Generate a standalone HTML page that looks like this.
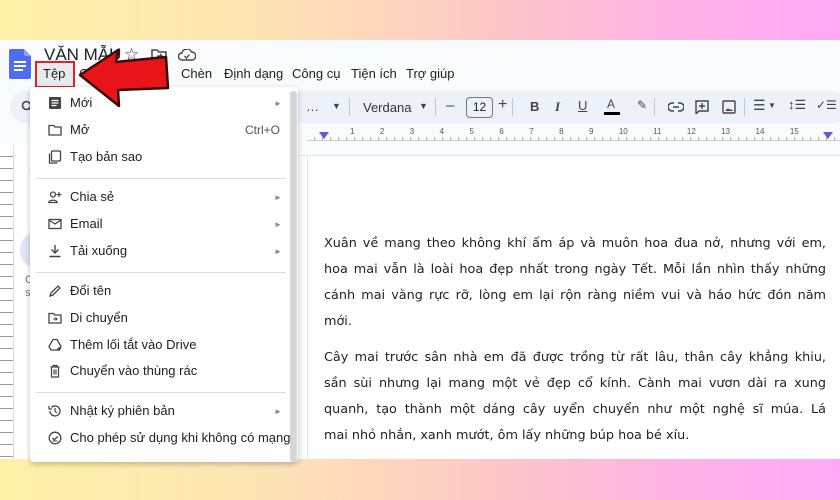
<!DOCTYPE html>
<html><head><meta charset="utf-8">
<style>
*{margin:0;padding:0;box-sizing:border-box}
body{width:840px;height:500px;overflow:hidden;position:relative;font-family:"Liberation Sans",Arial,sans-serif;color:#202124;background:#f9fbfd}
.band{position:absolute;left:0;width:840px;background:linear-gradient(90deg,#fdf1a8 0%,#fde6b4 30%,#fdc6c8 60%,#fdb3e6 80%,#ffa9f6 100%)}
.a{position:absolute;white-space:nowrap}
.menu{position:absolute;left:30px;top:87px;width:268px;height:375px;background:#fff;box-shadow:0 2px 6px rgba(0,0,0,.25);border-radius:4px}
.mi{position:absolute;left:40px;font-size:13px;color:#202124}
.ic{position:absolute;left:18px;width:14px;height:14px}
.ar{position:absolute;left:244px;font-size:8px;color:#888}
.sep{position:absolute;left:6px;right:12px;height:1px;background:#dadce0}
.doc{position:absolute;left:324px;width:502px;font-family:"DejaVu Sans",Verdana,sans-serif;font-size:12.8px;color:#222;line-height:26px}
.doc span{display:block;text-align:justify;text-align-last:justify;white-space:nowrap}
.doc span.l{text-align-last:left}
</style></head><body>
<div class="band" style="top:0;height:40px"></div>
<div class="band" style="top:459px;height:41px"></div>

<!-- header -->
<svg class="a" style="left:9px;top:49px" width="22" height="30" viewBox="0 0 22 30"><path d="M2 0h13l7 7v21a2 2 0 0 1-2 2H2a2 2 0 0 1-2-2V2a2 2 0 0 1 2-2z" fill="#4f6cf5"/><path d="M15 0l7 7h-5a2 2 0 0 1-2-2z" fill="#8fa3f8"/><rect x="5" y="12" width="12" height="2" fill="#fff"/><rect x="5" y="16" width="12" height="2" fill="#fff"/><rect x="5" y="20" width="9" height="2" fill="#fff"/></svg>
<div class="a" style="left:44px;top:45px;font-size:17px;color:#1f1f1f">VĂN MẪU</div>
<div class="a" style="left:124px;top:45px;font-size:17px;color:#444">☆</div>
<svg class="a" style="left:151px;top:48px" width="16" height="14" viewBox="0 0 16 14"><path d="M1 2h5l2 2h7v9H1z" fill="none" stroke="#444" stroke-width="1.5"/><path d="M6 8h5M9 6l2 2-2 2" stroke="#444" stroke-width="1.3" fill="none"/></svg>
<svg class="a" style="left:178px;top:49px" width="18" height="12" viewBox="0 0 18 12"><path d="M4 11a3.5 3.5 0 0 1 0-7 5 5 0 0 1 9.5-1A4 4 0 0 1 14 11z" fill="none" stroke="#444" stroke-width="1.4"/><path d="M6.5 7l2 2 3-3.5" fill="none" stroke="#444" stroke-width="1.3"/></svg>
<div class="a" style="left:35px;top:61px;width:40px;height:27px;border:2.5px solid #e52027;background:#e8eaed"></div>
<div class="a" style="left:43px;top:66px;font-size:13px">Tệp</div>
<div class="a" style="left:79px;top:66px;font-size:13px">Chỉnh sửa</div>
<div class="a" style="left:181px;top:66px;font-size:13px">Chèn</div>
<div class="a" style="left:224px;top:66px;font-size:13px">Định dạng</div>
<div class="a" style="left:292px;top:66px;font-size:13px">Công cụ</div>
<div class="a" style="left:351px;top:66px;font-size:13px">Tiện ích</div>
<div class="a" style="left:406px;top:66px;font-size:13px">Trợ giúp</div>

<!-- toolbar -->
<div class="a" style="left:10px;top:91px;width:840px;height:32px;border-radius:16px;background:#edf2fa"></div>
<svg class="a" style="left:21px;top:100px" width="14" height="14" viewBox="0 0 14 14"><circle cx="5.5" cy="5.5" r="4" fill="none" stroke="#444" stroke-width="1.6"/><path d="M8.5 8.5l4 4" stroke="#444" stroke-width="1.8"/></svg>
<div class="a" style="left:306px;top:99px;font-size:13px;color:#444">…</div>
<div class="a" style="left:332px;top:101px;font-size:9px;color:#444">▼</div>
<div class="a" style="left:349px;top:98px;width:1px;height:18px;background:#c7c7c7"></div>
<div class="a" style="left:363px;top:100px;font-size:13px;color:#333">Verdana</div>
<div class="a" style="left:419px;top:101px;font-size:9px;color:#444">▼</div>
<div class="a" style="left:435px;top:98px;width:1px;height:18px;background:#c7c7c7"></div>
<div class="a" style="left:446px;top:97px;font-size:15px;color:#444">–</div>
<div class="a" style="left:466px;top:97px;width:27px;height:21px;border:1px solid #747775;border-radius:4px;font-size:12px;text-align:center;line-height:19px">12</div>
<div class="a" style="left:498px;top:96px;font-size:16px;color:#444">+</div>
<div class="a" style="left:512px;top:98px;width:1px;height:18px;background:#c7c7c7"></div>
<div class="a" style="left:530px;top:99px;font-size:13px;font-weight:bold;color:#444">B</div>
<div class="a" style="left:555px;top:99px;font-size:13px;font-style:italic;font-family:'Liberation Serif',serif;font-weight:bold;color:#444">I</div>
<div class="a" style="left:578px;top:98px;font-size:13px;text-decoration:underline;color:#444">U</div>
<div class="a" style="left:607px;top:97px;font-size:12px;color:#444">A</div>
<div class="a" style="left:604px;top:112px;width:16px;height:3px;background:#000"></div>
<div class="a" style="left:637px;top:98px;font-size:12px;color:#444">✎</div>
<div class="a" style="left:654px;top:98px;width:1px;height:18px;background:#c7c7c7"></div>
<svg class="a" style="left:668px;top:102px" width="16" height="10" viewBox="0 0 16 10"><path d="M6 1H4a4 4 0 0 0 0 8h2M10 1h2a4 4 0 0 1 0 8h-2M5 5h6" fill="none" stroke="#444" stroke-width="1.5"/></svg>
<svg class="a" style="left:695px;top:100px" width="14" height="14" viewBox="0 0 14 14"><path d="M1 1h12v10H4l-3 3z" fill="none" stroke="#444" stroke-width="1.4"/><path d="M7 3v6M4 6h6" stroke="#444" stroke-width="1.4"/></svg>
<svg class="a" style="left:722px;top:100px" width="14" height="14" viewBox="0 0 14 14"><rect x="1" y="1" width="12" height="12" rx="1" fill="none" stroke="#444" stroke-width="1.4"/><path d="M3 11l3-3 2 2 1-1 2 2z" fill="#444"/></svg>
<div class="a" style="left:744px;top:98px;width:1px;height:18px;background:#c7c7c7"></div>
<div class="a" style="left:753px;top:97px;font-size:14px;color:#444">☰</div>
<div class="a" style="left:768px;top:101px;font-size:8px;color:#444">▼</div>
<div class="a" style="left:788px;top:97px;font-size:13px;color:#444">↕☰</div>
<div class="a" style="left:816px;top:98px;font-size:12px;color:#444">✓☰</div>

<!-- ruler -->
<div class="a" style="left:307px;top:128px;width:533px;height:13px;border-bottom:1px solid #c9ccd1;background:repeating-linear-gradient(90deg,transparent 0 7px,#aaa 7px 8px);background-size:8px 4px;background-repeat:repeat-x;background-position:0 9px"></div>
<div class="a" style="left:319px;top:132px;width:0;height:0;border-left:5px solid transparent;border-right:5px solid transparent;border-top:7px solid #6a5acd"></div>
<div class="a" style="left:823px;top:132px;width:0;height:0;border-left:5px solid transparent;border-right:5px solid transparent;border-top:7px solid #6a5acd"></div>
<div class="a" style="left:350px;top:127px;font-size:8px;color:#555;word-spacing:23.2px">1 2 3 4 5 6 7 8 9 10 11 12 13 14 15</div>
<div class="a" style="left:0;top:155px;width:840px;height:1px;background:#e3e5e8"></div>

<!-- left sidebar -->
<div class="a" style="left:0;top:145px;width:14px;height:314px;border-right:1px solid #ddd;background:repeating-linear-gradient(180deg,#fff 0 11px,#999 11px 12px)"></div>
<div class="a" style="left:16px;top:145px;width:280px;height:314px;background:#fff"></div>
<div class="a" style="left:26px;top:155px;font-size:18px;color:#444">←</div>
<div class="a" style="left:30px;top:204px;font-size:13px">C</div>
<div class="a" style="left:20px;top:231px;width:38px;height:38px;border-radius:50%;background:#dfe5f7"></div>
<div class="a" style="left:25px;top:274px;font-size:11px;color:#777;line-height:13px">Cá<br>sẽ</div>

<!-- page -->
<div class="a" style="left:307px;top:157px;width:533px;height:302px;background:#fff;border-left:1px solid #e3e5e8"></div>
<div class="doc" style="top:231px">
<span>Xuân về mang theo không khí ấm áp và muôn hoa đua nở, nhưng với em,</span>
<span>hoa mai vẫn là loài hoa đẹp nhất trong ngày Tết. Mỗi lần nhìn thấy những</span>
<span>cánh mai vàng rực rỡ, lòng em lại rộn ràng niềm vui và háo hức đón năm</span>
<span class="l">mới.</span>
</div>
<div class="doc" style="top:345px">
<span>Cây mai trước sân nhà em đã được trồng từ rất lâu, thân cây khẳng khiu,</span>
<span>sần sùi nhưng lại mang một vẻ đẹp cổ kính. Cành mai vươn dài ra xung</span>
<span>quanh, tạo thành một dáng cây uyển chuyển như một nghệ sĩ múa. Lá</span>
<span class="l">mai nhỏ nhắn, xanh mướt, ôm lấy những búp hoa bé xíu.</span>
</div>

<!-- menu -->
<div class="menu">
<div class="a" style="left:260px;top:4px;width:7px;height:371px;background:#d6d6d6;border-radius:3px"></div>
<svg class="ic" style="top:9px" viewBox="0 0 14 14"><rect x="1" y="1" width="12" height="12" rx="1" fill="#444"/><path d="M3.5 4.5h7M3.5 7h7M3.5 9.5h5" stroke="#fff" stroke-width="1.2"/></svg>
<div class="mi" style="top:8px">Mới</div><div class="ar" style="top:12px">►</div>
<svg class="ic" style="top:36px" viewBox="0 0 14 14"><path d="M1 2.5h4.5l1.5 1.5H13v8H1z" fill="none" stroke="#444" stroke-width="1.3"/></svg>
<div class="mi" style="top:35px">Mở</div><div class="a" style="left:215px;top:36px;font-size:12px;color:#555">Ctrl+O</div>
<svg class="ic" style="top:63px" viewBox="0 0 14 14"><rect x="3.5" y="1" width="9" height="10" rx="1" fill="none" stroke="#444" stroke-width="1.3"/><path d="M1.5 3.5v9.5h8" fill="none" stroke="#444" stroke-width="1.3"/></svg>
<div class="mi" style="top:62px">Tạo bản sao</div>
<div class="sep" style="top:91px"></div>
<svg class="ic" style="top:103px" viewBox="0 0 14 14"><circle cx="5" cy="4.5" r="2.5" fill="none" stroke="#444" stroke-width="1.3"/><path d="M0.8 12.5c0-3 8.4-3 8.4 0z" fill="none" stroke="#444" stroke-width="1.3"/><path d="M11 2v5M8.5 4.5h5" stroke="#444" stroke-width="1.2"/></svg>
<div class="mi" style="top:102px">Chia sẻ</div><div class="ar" style="top:106px">►</div>
<svg class="ic" style="top:130px" viewBox="0 0 14 14"><rect x="1" y="2.5" width="12" height="9" fill="none" stroke="#444" stroke-width="1.3"/><path d="M1 3l6 4 6-4" fill="none" stroke="#444" stroke-width="1.3"/></svg>
<div class="mi" style="top:129px">Email</div><div class="ar" style="top:133px">►</div>
<svg class="ic" style="top:157px" viewBox="0 0 14 14"><path d="M7 1v8M3.5 5.5L7 9l3.5-3.5M1.5 12.5h11" fill="none" stroke="#444" stroke-width="1.4"/></svg>
<div class="mi" style="top:156px">Tải xuống</div><div class="ar" style="top:160px">►</div>
<div class="sep" style="top:185px"></div>
<svg class="ic" style="top:197px" viewBox="0 0 14 14"><path d="M2 12l1-3 7-7 2 2-7 7z" fill="none" stroke="#444" stroke-width="1.3"/></svg>
<div class="mi" style="top:196px">Đổi tên</div>
<svg class="ic" style="top:224px" viewBox="0 0 14 14"><path d="M1 2.5h4.5l1.5 1.5H13v8H1z" fill="none" stroke="#444" stroke-width="1.3"/><path d="M5 8h4M7.5 6.5L9 8l-1.5 1.5" stroke="#444" stroke-width="1.1" fill="none"/></svg>
<div class="mi" style="top:223px">Di chuyển</div>
<svg class="ic" style="top:251px" viewBox="0 0 14 14"><path d="M5 1.5h4l4 7-2 3.5H3l-2-3.5z" fill="none" stroke="#444" stroke-width="1.3"/><path d="M11 9v4M9 11h4" stroke="#444" stroke-width="1.2"/></svg>
<div class="mi" style="top:250px">Thêm lối tắt vào Drive</div>
<svg class="ic" style="top:277px" viewBox="0 0 14 14"><path d="M2.5 3h9M5 3V1.5h4V3M3.5 3v10h7V3M6 5.5v5M8 5.5v5" fill="none" stroke="#444" stroke-width="1.2"/></svg>
<div class="mi" style="top:276px">Chuyển vào thùng rác</div>
<div class="sep" style="top:305px"></div>
<svg class="ic" style="top:317px" viewBox="0 0 14 14"><path d="M2 7a5 5 0 1 0 1.5-3.6" fill="none" stroke="#444" stroke-width="1.3"/><path d="M1 2v3h3" fill="none" stroke="#444" stroke-width="1.2"/><path d="M7 4v3.3l2 1.5" fill="none" stroke="#444" stroke-width="1.2"/></svg>
<div class="mi" style="top:316px">Nhật ký phiên bản</div><div class="ar" style="top:320px">►</div>
<svg class="ic" style="top:344px" viewBox="0 0 14 14"><circle cx="7" cy="7" r="5.8" fill="none" stroke="#444" stroke-width="1.3"/><path d="M4.5 7l1.8 1.8 3.4-3.4" fill="none" stroke="#444" stroke-width="1.3"/><path d="M4.5 10h5" stroke="#444" stroke-width="1"/></svg>
<div class="mi" style="top:343px">Cho phép sử dụng khi không có mạng</div>
</div>

<!-- red arrow -->
<svg class="a" style="left:74px;top:42px" width="100" height="70" viewBox="0 0 100 70"><path d="M6 33L44 8 42 20 92 15 94 46 44 48 45 64z" fill="#e8141a" stroke="#3a0a0a" stroke-width="2.5" stroke-linejoin="round"/></svg>
</body></html>
